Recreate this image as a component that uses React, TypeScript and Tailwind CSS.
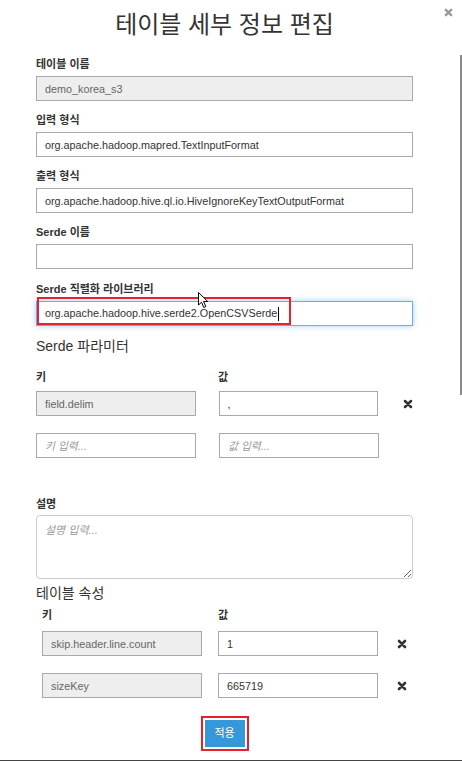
import React from 'react';

const XIcon: React.FC<{ className?: string }> = ({ className }) => (
  <svg viewBox="0 0 10 10" className={className} fill="none" stroke="currentColor" strokeWidth="2.6" strokeLinecap="round">
    <path d="M2 2 L8 8 M8 2 L2 8" />
  </svg>
);

const inputBase =
  'block h-[25px] w-full border border-[#a9a9a9] px-[8px] text-[10.8px] text-[#333] outline-none placeholder:italic placeholder:text-[#999]';

const Field: React.FC<{ label: string; value?: string; disabled?: boolean }> = ({ label, value, disabled }) => (
  <div className="mt-[11px]">
    <label className="block h-4 text-[11px] font-bold leading-4 text-[#333]">{label}</label>
    <input
      readOnly
      defaultValue={value}
      className={`${inputBase} mt-1 ${disabled ? 'bg-[#eee] text-[#666]' : 'bg-white'}`}
    />
  </div>
);

const PairRow: React.FC<{ k?: string; v?: string; removable?: boolean; keyPh?: string; valPh?: string; gap: string; xGap: string }> = ({
  k,
  v,
  removable,
  keyPh,
  valPh,
  gap,
  xGap,
}) => (
  <div className="flex items-center">
    <input
      readOnly
      defaultValue={k}
      placeholder={keyPh}
      className={`${inputBase} w-[160px]! ${k ? 'bg-[#eee] text-[#666]' : 'bg-white'}`}
    />
    <input readOnly defaultValue={v} placeholder={valPh} className={`${inputBase} w-[160px]! bg-white ${gap}`} />
    {removable && <XIcon className={`h-[10px] w-[10px] text-[#333] ${xGap}`} />}
  </div>
);

export default function App() {
  return (
    <div className="relative h-[761px] w-[462px] overflow-hidden border-b border-[#444] bg-white font-['Liberation_Sans','Noto_Sans_CJK_KR',sans-serif] text-[#333]">
      <button className="absolute right-[9px] top-[8px] text-[#999]">
        <XIcon className="h-[9px] w-[9px]" />
      </button>
      <div className="absolute right-0 top-[55px] h-[340px] w-[2px] bg-[#8a8a8a]" />

      <div className="pl-[36px] pr-[49px]">
        <h2 className="pt-[7px] text-center text-[24px] leading-[36px] text-[#333]">테이블 세부 정보 편집</h2>

        <div className="pt-[2px]">
          <Field label="테이블 이름" value="demo_korea_s3" disabled />
          <Field label="입력 형식" value="org.apache.hadoop.mapred.TextInputFormat" />
          <Field label="출력 형식" value="org.apache.hadoop.hive.ql.io.HiveIgnoreKeyTextOutputFormat" />
          <Field label="Serde 이름" value="" />

          <div className="mt-[12px]">
            <label className="block h-4 text-[11px] font-bold leading-4 text-[#333]">Serde 직렬화 라이브러리</label>
            <div className="relative mt-1">
              <div className="flex h-[25px] items-center border border-[#66afe9] px-[8px] text-[10.8px] text-[#333] shadow-[0_0_6px_rgba(102,175,233,0.6)]">
                <span>org.apache.hadoop.hive.serde2.OpenCSVSerde</span>
                <span className="ml-px h-[14px] w-px bg-black" />
              </div>
              <div className="absolute left-px top-[-4px] h-[28px] w-[254px] border-2 border-[#e8202a]" />
              <svg className="absolute left-[162px] top-[-9px] h-[17px] w-[12px]" viewBox="0 0 12 17">
                <path d="M0.5 0.5 L0.5 13 L3.5 10.2 L5.8 15.5 L7.8 14.6 L5.6 9.5 L9.8 9.5 Z" fill="white" stroke="black" strokeWidth="1" />
              </svg>
            </div>
          </div>
        </div>

        <h3 className="mt-[10px] text-[14px] leading-5 text-[#333]">Serde 파라미터</h3>
        <div className="mt-[13px] flex text-[11px] font-bold leading-4">
          <span className="w-[182px]">키</span>
          <span>값</span>
        </div>
        <div className="mt-[6px] flex flex-col gap-[17px]">
          <PairRow k="field.delim" v="," removable gap="ml-[23px]" xGap="ml-[25px]" />
          <PairRow keyPh="키 입력..." valPh="값 입력..." gap="ml-[23px]" xGap="ml-[25px]" />
        </div>

        <div className="mt-[38px]">
          <label className="block h-4 text-[11px] font-bold leading-4 text-[#333]">설명</label>
          <textarea
            readOnly
            placeholder="설명 입력..."
            className="mt-[3px] block h-[64px] w-full rounded-[4px] border border-[#ccc] px-[8px] py-[6px] text-[11px] outline-none placeholder:italic placeholder:text-[#999]"
          />
        </div>

        <h3 className="mt-[4px] text-[14px] leading-5 text-[#333]">테이블 속성</h3>
        <div className="pl-[6px]">
          <div className="mt-1 flex text-[11px] font-bold leading-4">
            <span className="w-[176px]">키</span>
            <span>값</span>
          </div>
          <div className="mt-2 flex flex-col gap-[17px]">
            <PairRow k="skip.header.line.count" v="1" removable gap="ml-[16px]" xGap="ml-[19px]" />
            <PairRow k="sizeKey" v="665719" removable gap="ml-[16px]" xGap="ml-[19px]" />
          </div>
        </div>

        <div className="mt-[18px] flex justify-center">
          <div className="border-2 border-[#e8202a] p-[2px]">
            <button className="block h-[27px] w-[40px] bg-[#3498db] text-[11px] text-white">적용</button>
          </div>
        </div>
      </div>
    </div>
  );
}
